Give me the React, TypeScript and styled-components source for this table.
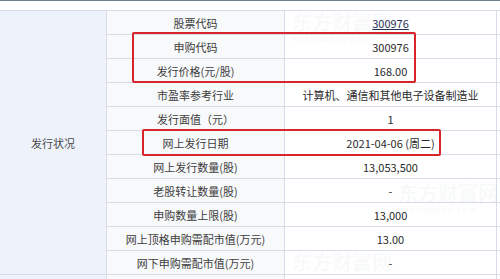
import React from "react";
import styled, { createGlobalStyle } from "styled-components";

const Global = createGlobalStyle`
  html, body { margin: 0; padding: 0; background: #ffffff; overflow: hidden; }
  body { font-family: "Noto Sans CJK SC", "Liberation Sans", sans-serif; }
`;

const Page = styled.div`
  position: relative;
  width: 500px;
  height: 279px;
  overflow: hidden;
  background: #fff;
`;

const TopRule = styled.div`
  height: 1px;
  background: #6f7e8c;
`;

const Gap = styled.div`
  height: 9px;
  background: #fff;
`;

const Table = styled.table`
  border-collapse: collapse;
  table-layout: fixed;
  margin-left: -1px;
  width: 520px;
  font-size: 11px;
  color: #3a3a3a;
`;

const GroupCell = styled.td`
  width: 104px;
  background: #eef3fb;
  border: 1px solid #d6dde8;
  text-align: center;
  vertical-align: middle;
  color: #4a4a4a;
`;

const LabelCell = styled.td`
  width: 177px;
  height: 23px;
  padding: 0;
  background: #f8f9fb;
  border: 1px solid #d6dde8;
  text-align: center;
  color: #3d3d3d;
  white-space: nowrap;
`;

const ValueCell = styled.td`
  width: 211px;
  padding: 0;
  background: #fff;
  border: 1px solid #d6dde8;
  text-align: center;
  color: #2a2a2a;
  white-space: nowrap;
`;

const ExtraCell = styled.td`
  background: #fff;
  border: 1px solid #d6dde8;
`;

const Link = styled.span`
  text-decoration: underline;
  color: #1f2f57;
`;

const Box = styled.div<{ $l: number; $t: number; $w: number; $h: number }>`
  position: absolute;
  left: ${(p) => p.$l}px;
  top: ${(p) => p.$t}px;
  width: ${(p) => p.$w}px;
  height: ${(p) => p.$h}px;
  border: 2px solid #d8242b;
  border-radius: 2px;
  box-sizing: border-box;
  pointer-events: none;
`;

const Mark = styled.div<{ $l: number; $t: number }>`
  position: absolute;
  left: ${(p) => p.$l}px;
  top: ${(p) => p.$t}px;
  color: rgba(150, 160, 175, 0.08);
  font-family: "Noto Sans CJK SC", serif;
  font-weight: 700;
  font-size: 20px;
  line-height: 1;
  pointer-events: none;
  white-space: nowrap;
`;

const MarkSub = styled.div`
  font-family: "Liberation Sans", sans-serif;
  font-size: 9px;
  font-weight: 700;
  letter-spacing: 1px;
  margin-top: 3px;
`;

const rows: [string, React.ReactNode][] = [
  ["股票代码", <Link>300976</Link>],
  ["申购代码", "300976"],
  ["发行价格(元/股)", "168.00"],
  ["市盈率参考行业", "计算机、通信和其他电子设备制造业"],
  ["发行面值（元）", "1"],
  ["网上发行日期", "2021-04-06 (周二)"],
  ["网上发行数量(股)", "13,053,500"],
  ["老股转让数量(股)", "-"],
  ["申购数量上限(股)", "13,000"],
  ["网上顶格申购需配市值(万元)", "13.00"],
  ["网下申购需配市值(万元)", "-"],
];

export default function App() {
  return (
    <Page>
      <Global />
      <TopRule />
      <Gap />
      <Table>
        <tbody>
          {rows.map(([label, value], i) => (
            <tr key={i}>
              {i === 0 && <GroupCell rowSpan={rows.length}>发行状况</GroupCell>}
              <LabelCell>{label}</LabelCell>
              <ValueCell>{value}</ValueCell>
              <ExtraCell />
            </tr>
          ))}
          <tr>
            <GroupCell />
            <LabelCell />
            <ValueCell />
            <ExtraCell />
          </tr>
        </tbody>
      </Table>
      <Mark $l={292} $t={12}>
        东方财富网
        <MarkSub>eastmoney.com</MarkSub>
      </Mark>
      <Mark $l={398} $t={183}>
        东方财富网
        <MarkSub>eastmoney.com</MarkSub>
      </Mark>
      <Mark $l={292} $t={252}>
        东方财富网
      </Mark>
      <Box $l={132} $t={32} $w={284} $h={51} />
      <Box $l={142} $t={129} $w={299} $h={27} />
    </Page>
  );
}
